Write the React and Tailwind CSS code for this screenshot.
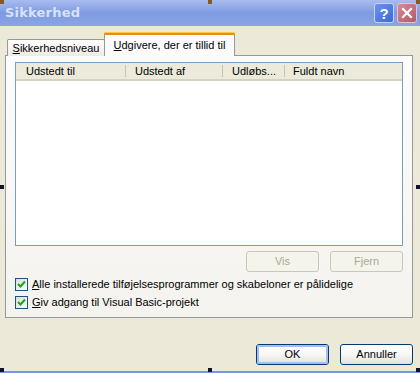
import React from 'react';

const font = { fontFamily: '"Liberation Sans", Arial, sans-serif' };

function Handle({ className }) {
  return <div className={`absolute w-[4px] h-[4px] ${className}`} />;
}

function Check({ children, rest }) {
  return (
    <div className="flex items-center h-[13px]">
      <div className="w-[13px] h-[13px] border border-[#1c5180] bg-gradient-to-br from-[#dcdcd7] to-white flex items-center justify-center shrink-0">
        <svg width="9" height="9" viewBox="0 0 9 9">
          <path d="M1 4 L3.5 6.5 L8 1.5" stroke="#21a121" strokeWidth="2" fill="none" />
        </svg>
      </div>
      <span className="ml-[4px] text-[11px] text-black leading-none whitespace-nowrap">
        <span className="underline">{children}</span>
        {rest}
      </span>
    </div>
  );
}

function DlgButton({ children, primary, disabled }) {
  if (disabled) {
    return (
      <div className="w-[73px] h-[21px] rounded-[3px] border border-[#c9c7ba] bg-[#f5f4ea] flex items-center justify-center text-[11px] text-[#aca899]">
        {children}
      </div>
    );
  }
  return (
    <div className="w-[73px] h-[21px] rounded-[3px] border border-[#003c74] bg-gradient-to-b from-white via-[#f7f7f4] to-[#e3e2d9] flex items-center justify-center text-[11px] text-black">
      <div className={`w-full h-full rounded-[2px] flex items-center justify-center ${primary ? 'border-2 border-[#a4bdf4]' : ''}`}>
        {children}
      </div>
    </div>
  );
}

export default function App() {
  return (
    <div className="relative w-[420px] h-[373px] bg-[#ece9d8] overflow-hidden" style={font}>
      {/* title bar */}
      <div className="h-[26px] bg-gradient-to-b from-[#a9bcef] via-[#7f9ae1] to-[#8ca4e6] flex items-center pl-[5px] pr-[3px]">
        <span className="text-[13px] font-bold text-[#d8e2f7] tracking-[0.2px]" style={{ fontFamily: '"DejaVu Sans", sans-serif' }}>
          Sikkerhed
        </span>
        <div className="ml-auto flex gap-[3px]">
          <div className="w-[20px] h-[20px] rounded-[3px] border border-[#c7d4f4] bg-gradient-to-br from-[#6b93ee] to-[#3b6ad8] flex items-center justify-center text-white text-[15px] font-bold leading-none">
            ?
          </div>
          <div className="w-[20px] h-[20px] rounded-[3px] border border-[#e0c4cc] bg-gradient-to-br from-[#d88a98] to-[#b25a68] flex items-center justify-center">
            <svg width="12" height="12" viewBox="0 0 12 12">
              <path d="M2 2 L10 10 M10 2 L2 10" stroke="white" strokeWidth="2.2" strokeLinecap="square" />
            </svg>
          </div>
        </div>
      </div>

      {/* tabs */}
      <div className="pl-[5px] pr-[7px] pt-[7px]">
        <div className="flex items-end h-[23px] pl-[2px]">
          <div className="w-[98px] h-[17px] border border-b-0 border-[#919b9c] rounded-t-[2px] bg-gradient-to-b from-white to-[#ecebe5] text-[11px] flex items-center justify-center text-black whitespace-nowrap">
            <span><span className="underline">S</span>ikkerhedsniveau</span>
          </div>
          <div className="relative w-[131px] h-[23px] -ml-[1px] border-x border-[#919b9c] bg-[#fcfcfe] text-[11px] flex items-center justify-center text-black pt-[2px] z-10 whitespace-nowrap">
            <div className="absolute -top-[1px] -left-[1px] -right-[1px] h-[3px] rounded-t-[2px] bg-[#e68b2c] border-t border-[#ffc73c]" />
            <span><span className="underline">U</span>dgivere, der er tillid til</span>
          </div>
        </div>

        {/* panel */}
        <div className="-mt-[1px] h-[263px] border border-[#919b9c] bg-gradient-to-b from-[#fcfcfe] to-[#f4f3ee] px-[9px] pt-[6px]">
          <div className="h-[184px] border border-[#7f9db9] bg-white">
            <div className="h-[18px] flex items-center bg-[#ebeadb] border-b-2 border-[#d6d2c2] text-[11px] text-black whitespace-nowrap">
              <div className="w-[110px] pl-[10px] border-r border-[#c7c5b2] h-[12px] flex items-center">Udstedt til</div>
              <div className="w-[97px] pl-[9px] border-r border-[#c7c5b2] h-[12px] flex items-center">Udstedt af</div>
              <div className="w-[62px] pl-[9px] border-r border-[#c7c5b2] h-[12px] flex items-center">Udløbs...</div>
              <div className="pl-[8px] h-[12px] flex items-center">Fuldt navn</div>
            </div>
          </div>
          <div className="flex justify-end gap-[11px] mt-[5px]">
            <DlgButton disabled>Vis</DlgButton>
            <DlgButton disabled>Fjern</DlgButton>
          </div>
          <div className="mt-[6px] flex flex-col gap-[5px]">
            <Check rest="lle installerede tilføjelsesprogrammer og skabeloner er pålidelige">A</Check>
            <Check rest="iv adgang til Visual Basic-projekt">G</Check>
          </div>
        </div>

        {/* dialog buttons */}
        <div className="flex justify-end gap-[11px] mt-[26px]">
          <DlgButton primary>OK</DlgButton>
          <DlgButton>Annuller</DlgButton>
        </div>
      </div>

      {/* bottom frame line */}
      <div className="absolute left-0 right-0 bottom-0 h-[2px] bg-[#7c94e6]" />

      {/* selection handles */}
      <Handle className="left-0 top-0 bg-[#8a5a14]" />
      <Handle className="left-[208px] top-0 bg-[#8a5a14]" />
      <Handle className="right-0 top-0 bg-[#8a5a14]" />
      <Handle className="left-0 top-[185px] bg-[#141428]" />
      <Handle className="right-0 top-[185px] bg-[#141428]" />
      <Handle className="left-0 bottom-[1px] bg-[#141428]" />
      <Handle className="left-[208px] bottom-[1px] bg-[#141428]" />
      <Handle className="right-0 bottom-[1px] bg-[#141428]" />
    </div>
  );
}
